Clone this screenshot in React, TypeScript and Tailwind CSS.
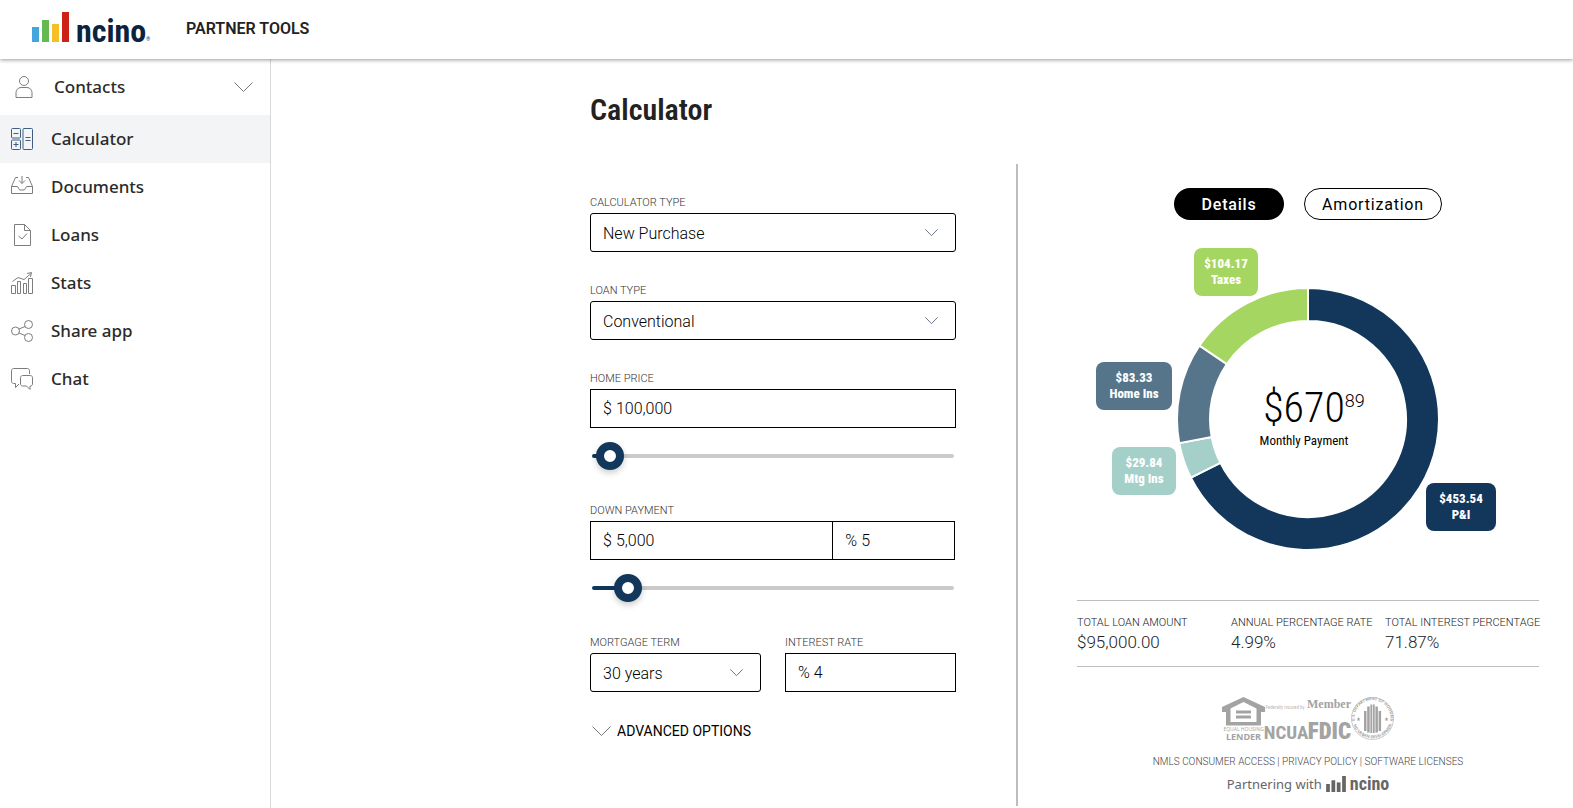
import { useState } from 'react';
import type { ReactNode } from 'react';

const NAVY = '#12375b';

const segments = [
  { label: 'P&I', amount: 453.54, color: '#12375b' },
  { label: 'Mtg Ins', amount: 29.84, color: '#a5d0ca' },
  { label: 'Home Ins', amount: 83.33, color: '#56748a' },
  { label: 'Taxes', amount: 104.17, color: '#a5d661' },
];

const summary = [
  { label: 'TOTAL LOAN AMOUNT', value: '$95,000.00' },
  { label: 'ANNUAL PERCENTAGE RATE', value: '4.99%' },
  { label: 'TOTAL INTEREST PERCENTAGE', value: '71.87%' },
];

function Icon({ children, className = 'text-[#7d7d7d]' }: { children: ReactNode; className?: string }) {
  return (
    <svg
      width="22"
      height="22"
      viewBox="0 0 22 22"
      fill="none"
      stroke="currentColor"
      strokeWidth="1"
      strokeLinejoin="round"
      aria-hidden="true"
      className={`shrink-0 ${className}`}
    >
      {children}
    </svg>
  );
}

const navItems = [
  {
    label: 'Calculator',
    active: true,
    icon: (
      <Icon className="text-[#3f5f82]">
        <rect x="0.5" y="0.5" width="9" height="9.5" rx="1" />
        <rect x="0.5" y="12" width="9" height="9.5" rx="1" />
        <rect x="12" y="0.5" width="9.5" height="21" rx="1" />
        <path d="M2.5 5.5h5M2.500 16.500h5M5 14v5M14.500 9.500h5M14.500 12.500h5" />
      </Icon>
    ),
  },
  {
    label: 'Documents',
    icon: (
      <Icon>
        <path d="M7 1.500H4.500L0.500 10.500v7h21v-7l-4-9H15" />
        <path d="M0.500 10.500h5.500c1.500 0 1.500 3.500 3 3.500h4c1.500 0 1.500-3.500 3-3.500h5.500M11 0v7.500M8 4.500l3 3 3-3" />
      </Icon>
    ),
  },
  {
    label: 'Loans',
    icon: (
      <Icon>
        <path d="M13.500 0.500h-10v21h16V6.500zM13.500 0.500v6h6M7.500 12l3.500 3 5-5.500" />
      </Icon>
    ),
  },
  {
    label: 'Stats',
    icon: (
      <Icon>
        <path d="M0.500 13.500h4v8h-4zM6.500 9.500h3v12h-3zM12.500 11.500h3v10h-3zM17.500 6.500h4v15h-4z" />
        <path d="M1.500 9.500l5.500-4 6 2L20 1.500M16 1.500l4.500-1L19.500 5" />
      </Icon>
    ),
  },
  {
    label: 'Share app',
    icon: (
      <Icon>
        <circle cx="4.500" cy="11" r="4" />
        <circle cx="17.500" cy="4.500" r="4" />
        <circle cx="17.500" cy="17.500" r="4" />
        <path d="M8 9l6-2.500M8 13l6 2.500" />
      </Icon>
    ),
  },
  {
    label: 'Chat',
    icon: (
      <Icon>
        <path d="M8 16L4.500 19.500v-4h-2c-1 0-2-1-2-2v-11c0-1 1-2 2-2h14c1 0 2 1 2 2V6" />
        <path d="M11.500 7.500h8c1 0 2 1 2 2v6.500c0 1-1 2-2 2H19V21.500L15.500 18h-4c-1 0-2-1-2-2V9.500c0-1 1-2 2-2z" />
      </Icon>
    ),
  },
];

function Chevron({ width, height, className = '' }: { width: number; height: number; className?: string }) {
  return (
    <svg
      width={width}
      height={height}
      viewBox="0 0 20 10"
      preserveAspectRatio="none"
      fill="none"
      stroke="currentColor"
      strokeWidth="1"
      aria-hidden="true"
      className={className}
    >
      <path d="M0.500 0.500L10 9.500L19.500 0.500" vectorEffect="non-scaling-stroke" />
    </svg>
  );
}

function Bars({ width, height, colors }: { width: number; height: number; colors: string[] }) {
  return (
    <svg width={width} height={height} viewBox="0 0 37 30" aria-hidden="true" className="shrink-0">
      <rect x="0" y="15" width="7" height="15" fill={colors[0]} />
      <rect x="10" y="8" width="7" height="22" fill={colors[1]} />
      <rect x="20" y="12" width="7" height="18" fill={colors[2]} />
      <rect x="30" y="0" width="7" height="30" fill={colors[3]} />
    </svg>
  );
}

function Header() {
  return (
    <header className="relative z-10 flex h-[59px] shrink-0 items-center bg-white pl-8 shadow-[0_1px_4px_rgba(0,0,0,0.4)]">
      <a href="#" className="flex w-[118px] items-end gap-[7px] pb-1.5 text-[#0c2340]">
        <Bars width={37} height={30} colors={['#42a6dd', '#64b950', '#f6bf27', '#cb2116']} />
        <span className="flex h-[30px] items-end">
          <span className="font-['Roboto_Condensed'] text-[32px] leading-[22px] font-bold">ncino</span>
          <span className="text-[5px] leading-[5px]">®</span>
        </span>
      </a>
      <span className="ml-9 pb-0.5 text-base font-semibold text-[#222]">PARTNER TOOLS</span>
    </header>
  );
}

function Sidebar() {
  return (
    <nav className="w-[271px] shrink-0 border-r border-[#d8d8d8] font-['Noto_Sans'] text-[17px] font-medium text-[#2b2b2b]">
      <button type="button" className="flex h-14 w-full items-center pr-[17px] pl-[13px]">
        <Icon>
          <circle cx="11" cy="5" r="4.500" />
          <path d="M3 21.500v-5c0-3 2.500-5 5-5h6c2.500 0 5 2 5 5v5z" />
        </Icon>
        <span className="ml-[19px]">Contacts</span>
        <Chevron width={19} height={10} className="ml-auto text-[#777]" />
      </button>
      {navItems.map((item) => (
        <a
          key={item.label}
          href="#"
          aria-current={item.active ? 'page' : undefined}
          className={`flex h-12 items-center gap-[18px] pl-[11px] ${item.active ? 'bg-[#f3f4f6]' : ''}`}
        >
          {item.icon}
          {item.label}
        </a>
      ))}
    </nav>
  );
}

function Label({ htmlFor, children }: { htmlFor: string; children: ReactNode }) {
  return (
    <label htmlFor={htmlFor} className="mb-0.5 block pt-px text-[11px] leading-4 font-light text-[#333]">
      {children}
    </label>
  );
}

function SelectField({ id, label, options }: { id: string; label: string; options: string[] }) {
  return (
    <div>
      <Label htmlFor={id}>{label}</Label>
      <div className="relative">
        <select
          id={id}
          className="h-[39px] w-full appearance-none rounded-[3px] border border-black bg-white px-3 pt-0.5 text-base font-light text-black"
        >
          {options.map((option) => (
            <option key={option}>{option}</option>
          ))}
        </select>
        <Chevron width={13} height={7} className="pointer-events-none absolute top-4 right-[18px] text-[#6b7684]" />
      </div>
    </div>
  );
}

interface AmountProps {
  id: string;
  unit: string;
  defaultValue: string;
  ariaLabel?: string;
  className?: string;
}

function Amount({ id, unit, defaultValue, ariaLabel, className = '' }: AmountProps) {
  return (
    <div className={`flex h-[39px] items-center gap-1 border border-black px-3 text-base font-light text-black ${className}`}>
      <span>{unit}</span>
      <input id={id} aria-label={ariaLabel} defaultValue={defaultValue} className="w-full min-w-0 outline-none" />
    </div>
  );
}

function Slider({ label, initial, max }: { label: string; initial: number; max: number }) {
  const [value, setValue] = useState(initial);
  const percent = (value / max) * 100;

  return (
    <div className="mx-0.5 mt-3.5 flex h-7 items-center">
      <div
        className="flex h-1 w-full items-center rounded-full"
        style={{ background: `linear-gradient(to right, ${NAVY} ${percent}%, #cacaca ${percent}%)` }}
      >
        <input
          type="range"
          aria-label={label}
          min={0}
          max={max}
          value={value}
          onChange={(e) => setValue(Number(e.target.value))}
          className="-mx-3.5 h-7 w-full min-w-[calc(100%+28px)] cursor-pointer appearance-none bg-transparent [&::-webkit-slider-thumb]:h-7 [&::-webkit-slider-thumb]:w-7 [&::-webkit-slider-thumb]:appearance-none [&::-webkit-slider-thumb]:rounded-full [&::-webkit-slider-thumb]:border-8 [&::-webkit-slider-thumb]:border-[#12375b] [&::-webkit-slider-thumb]:bg-white [&::-webkit-slider-thumb]:shadow-[0_3px_6px_rgba(0,0,0,0.2)]"
        />
      </div>
    </div>
  );
}

function CalculatorForm() {
  return (
    <form className="mt-16 flex flex-col">
      <div className="flex flex-col gap-[30px]">
        <SelectField id="calculator-type" label="CALCULATOR TYPE" options={['New Purchase', 'Refinance']} />
        <SelectField id="loan-type" label="LOAN TYPE" options={['Conventional', 'FHA', 'VA']} />
        <div>
          <Label htmlFor="home-price">HOME PRICE</Label>
          <Amount id="home-price" unit="$" defaultValue="100,000" />
          <Slider label="Home price" initial={100000} max={2000000} />
        </div>
      </div>
      <div className="mt-8">
        <Label htmlFor="down-payment">DOWN PAYMENT</Label>
        <div className="mr-px grid grid-cols-[2fr_1fr]">
          <Amount id="down-payment" unit="$" defaultValue="5,000" />
          <Amount id="down-percent" unit="%" defaultValue="5" ariaLabel="Down payment percent" className="border-l-0" />
        </div>
        <Slider label="Down payment" initial={5} max={50} />
      </div>
      <div className="mt-8 grid grid-cols-2 gap-6">
        <SelectField id="mortgage-term" label="MORTGAGE TERM" options={['30 years', '20 years', '15 years']} />
        <div>
          <Label htmlFor="interest-rate">INTEREST RATE</Label>
          <Amount id="interest-rate" unit="%" defaultValue="4" />
        </div>
      </div>
      <button type="button" className="mt-[27px] flex items-center gap-1.5 pl-0.5 text-sm leading-6 text-black">
        <Chevron width={19} height={10} className="text-[#777]" />
        ADVANCED OPTIONS
      </button>
    </form>
  );
}

function Badge({ index, className }: { index: number; className: string }) {
  const { label, amount, color } = segments[index];
  return (
    <div
      className={`absolute rounded-lg py-2 text-center font-['Roboto_Condensed'] text-[13px] leading-4 font-extrabold whitespace-nowrap text-white ${className}`}
      style={{ backgroundColor: color }}
    >
      ${amount}
      <br />
      {label}
    </div>
  );
}

function point(radius: number, fraction: number) {
  const angle = fraction * 2 * Math.PI;
  return `${131 + radius * Math.sin(angle)} ${131 - radius * Math.cos(angle)}`;
}

function PaymentChart() {
  const total = segments.reduce((sum, s) => sum + s.amount, 0);
  let start = 0;
  const arcs = segments.map((s) => {
    const end = start + s.amount / total;
    const large = end - start > 0.5 ? 1 : 0;
    const d = `M${point(131, start)}A131 131 0 ${large} 1 ${point(131, end)}L${point(98, end)}A98 98 0 ${large} 0 ${point(98, start)}Z`;
    start = end;
    return { d, color: s.color };
  });

  return (
    <div className="relative mx-auto mt-[68px] h-[262px] w-[262px]">
      <svg width="262" height="262" viewBox="0 0 262 262" role="img" aria-label="Monthly payment breakdown">
        {arcs.map((arc) => (
          <path key={arc.color} d={arc.d} fill={arc.color} stroke="#fff" strokeWidth="2" />
        ))}
      </svg>
      <div className="absolute inset-0 flex flex-col items-center justify-center pb-1.5 font-['Roboto_Condensed'] text-black">
        <div className="flex items-start pl-3 font-light">
          <span className="text-[42px] leading-[50px]">$670</span>
          <span className="font-[Roboto] text-lg leading-9">89</span>
        </div>
        <div className="pr-2 text-[13px] leading-4">Monthly Payment</div>
      </div>
      <Badge index={3} className="-top-10 left-[17px] w-16" />
      <Badge index={2} className="top-[74px] -left-[81px] w-[76px]" />
      <Badge index={1} className="top-[159px] -left-[65px] w-16" />
      <Badge index={0} className="top-[195px] left-[249px] w-[70px]" />
    </div>
  );
}

function AgencyLogos() {
  return (
    <div className="mt-[30px] flex justify-center">
      <svg width="43" height="43" viewBox="0 0 43 43" fill="#a3a3a3" role="img" aria-label="Equal Housing Lender" className="overflow-visible">
        <path fillRule="evenodd" d="M21.500 0L43 10V15H39V28.500H4V15H0V10zM21.500 5L8.500 11.500v13.500h26V11.500z" />
        <rect x="14" y="13.500" width="15" height="3" />
        <rect x="14" y="18.500" width="15" height="3" />
        <text x="21.500" y="34" textAnchor="middle" fontFamily="Open Sans" fontSize="5">EQUAL HOUSING</text>
        <text x="21.500" y="43" textAnchor="middle" fontFamily="Open Sans" fontSize="9" fontWeight="700">LENDER</text>
      </svg>
      <svg width="43" height="43" viewBox="0 0 43 43" fill="#a3a3a3" role="img" aria-label="Federally insured by NCUA" className="overflow-visible">
        <text x="20" y="12" textAnchor="middle" fontFamily="Roboto Condensed" fontSize="5" fill="#b9b9b9">Federally insured by</text>
        <text x="21" y="42" textAnchor="middle" fontFamily="Roboto Condensed" fontSize="19" fontWeight="700">NCUA</text>
      </svg>
      <svg width="43" height="43" viewBox="0 0 43 43" fill="#a3a3a3" role="img" aria-label="Member FDIC" className="overflow-visible">
        <text x="21" y="11" textAnchor="middle" fontFamily="Liberation Serif" fontSize="12" fontWeight="700">Member</text>
        <text x="21.500" y="42" textAnchor="middle" fontFamily="Roboto Condensed" fontSize="23" fontWeight="900">FDIC</text>
      </svg>
      <svg width="43" height="43" viewBox="0 0 43 43" fill="#a3a3a3" role="img" aria-label="U.S. Department of Housing and Urban Development" className="overflow-visible">
        <defs>
          <path id="seal-top" d="M4.500 27A18 18 0 1 1 38.500 27" />
          <path id="seal-bottom" d="M2.500 28.500A20.500 20.500 0 0 0 40.500 28.500" />
        </defs>
        <circle cx="21.500" cy="21.500" r="21" fill="none" stroke="#b5b5b5" strokeWidth="0.700" />
        <text fontFamily="Open Sans" fontSize="4" fontWeight="700">
          <textPath href="#seal-top" startOffset="50%" textAnchor="middle">U.S. DEPARTMENT OF HOUSING</textPath>
        </text>
        <text fontFamily="Open Sans" fontSize="4" fontWeight="700">
          <textPath href="#seal-bottom" startOffset="50%" textAnchor="middle">AND URBAN DEVELOPMENT</textPath>
        </text>
        <path d="M13 14h2.500v20H13zM16.200 9.500h2.500v26h-2.500zM19.400 7.500h1.800v28.500h-1.800zM21.900 7.500h1.800v28.500h-1.800zM24.400 9.500h2.500v26h-2.500zM27.600 14h2.500v20h-2.500z" />
        <path d="M7.500 20l.6 1.400 1.400.1-1.100 1 .4 1.500-1.300-.8-1.300.8.4-1.500-1.100-1 1.400-.1zM35.500 20l.6 1.400 1.400.1-1.100 1 .4 1.500-1.300-.8-1.300.8.4-1.500-1.100-1 1.400-.1z" />
      </svg>
    </div>
  );
}

function Results() {
  return (
    <section className="mt-[105px] mb-0.5 border-l-2 border-[#bdbdbd] pt-6 pr-[34px] pl-[59px]">
      <div className="flex justify-center gap-5 text-base">
        <button type="button" className="h-8 w-[110px] rounded-full bg-black pt-0.5 font-medium tracking-wider text-white">
          Details
        </button>
        <button type="button" className="h-8 w-[138px] rounded-full border border-black pt-0.5 tracking-wider text-black">
          Amortization
        </button>
      </div>
      <PaymentChart />
      <dl className="mt-[50px] grid grid-cols-3 border-y border-[#bdbdbd] py-[13px] font-light text-[#222]">
        {summary.map((item) => (
          <div key={item.label}>
            <dt className="text-[11px] leading-[18px] whitespace-nowrap">{item.label}</dt>
            <dd className="text-[17px] leading-[21px]">{item.value}</dd>
          </div>
        ))}
      </dl>
      <footer className="text-center">
        <AgencyLogos />
        <div className="mt-3.5 text-[10px] leading-4 font-light text-[#444]">
          <a href="#">NMLS CONSUMER ACCESS</a> | <a href="#">PRIVACY POLICY</a> | <a href="#">SOFTWARE LICENSES</a>
        </div>
        <div className="mt-1 flex items-center justify-center gap-1 font-['Noto_Sans'] text-[13px] leading-5 text-[#666]">
          <span>Partnering with</span>
          <Bars width={20} height={16} colors={['#666', '#666', '#666', '#666']} />
          <span className="font-['Roboto_Condensed'] text-lg leading-5 font-bold">ncino</span>
        </div>
      </footer>
    </section>
  );
}

export default function App() {
  return (
    <div className="flex min-h-screen flex-col bg-white font-[Roboto,sans-serif]">
      <Header />
      <div className="flex flex-1">
        <Sidebar />
        <main className="grid flex-1 grid-cols-[1fr_557px]">
          <div className="flex justify-end pr-[60px]">
            <div className="w-full max-w-[366px] pt-[31px]">
              <h1 className="font-['Roboto_Condensed'] text-3xl leading-10 font-semibold text-[#222]">Calculator</h1>
              <CalculatorForm />
            </div>
          </div>
          <Results />
        </main>
      </div>
    </div>
  );
}
